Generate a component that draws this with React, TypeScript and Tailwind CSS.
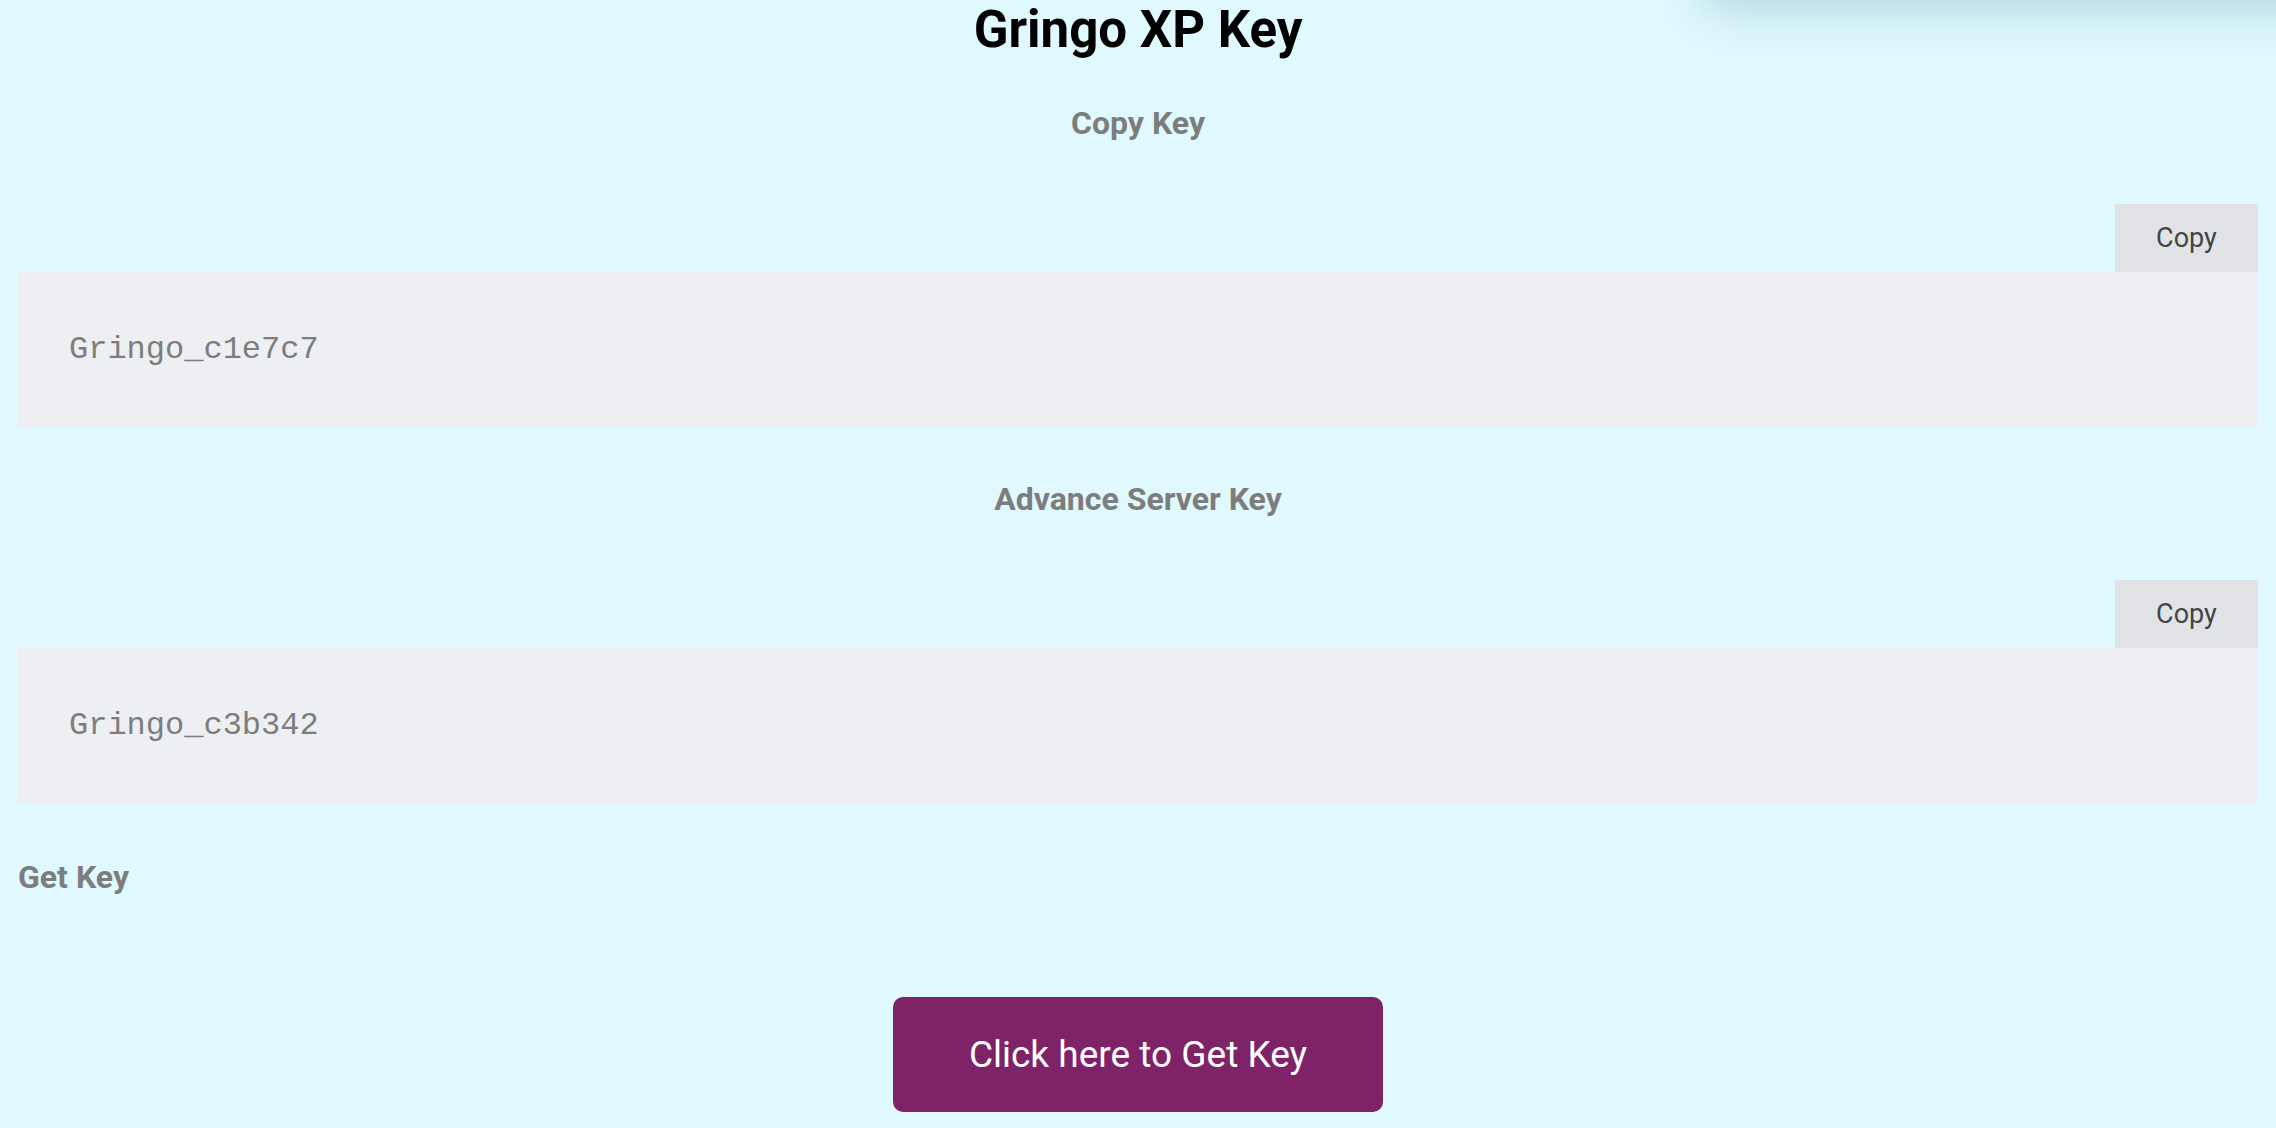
import React from 'react';

interface KeyBlock {
    title: string;
    value: string;
}

const keys: KeyBlock[] = [
    { title: 'Copy Key', value: 'Gringo_c1e7c7' },
    { title: 'Advance Server Key', value: 'Gringo_c3b342' },
];

export default function App() {
    const copy = (text: string) => {
        navigator.clipboard?.writeText(text).catch(() => {});
    };

    return (
        <div
            className="relative min-h-screen overflow-hidden bg-[#dff9fe] px-[18px]"
            style={{ fontFamily: 'Roboto, "Liberation Sans", sans-serif' }}
        >
            {/* floating panel sitting just above the viewport */}
            <div className="absolute top-[-90px] left-[1700px] right-[-60px] h-[90px] rounded-[28px] bg-[#dff9fe] shadow-[0_12px_44px_rgba(40,110,120,0.22)]" />

            <h1 className="text-center text-[51px] font-bold leading-[60px] text-black">
                Gringo XP Key
            </h1>

            {keys.map((k, i) => (
                <div key={i} className={i === 0 ? 'mt-[45px]' : 'mt-[54px]'}>
                    <h2 className="text-center text-[32px] font-bold leading-[37px] text-[#7d7d7d]">
                        {k.title}
                    </h2>
                    <div className="mt-[62px] flex justify-end">
                        <button
                            onClick={() => copy(k.value)}
                            className="h-[68px] w-[143px] bg-[#e2e3e7] text-[27px] text-[#444]"
                        >
                            Copy
                        </button>
                    </div>
                    <div className="flex h-[155px] items-center bg-[#eeeff3] pl-[51px]">
                        <span
                            className="text-[32px] text-[#7d7d7d]"
                            style={{ fontFamily: '"Liberation Mono", "Courier New", monospace' }}
                        >
                            {k.value}
                        </span>
                    </div>
                </div>
            ))}

            <h3 className="mt-[56px] text-[32px] font-bold leading-[37px] text-[#7d7d7d]">
                Get Key
            </h3>

            <div className="mt-[101px] flex justify-center">
                <button className="h-[115px] w-[490px] rounded-[10px] bg-[#7e2368] text-[37px] text-white">
                    Click here to Get Key
                </button>
            </div>
        </div>
    );
}
